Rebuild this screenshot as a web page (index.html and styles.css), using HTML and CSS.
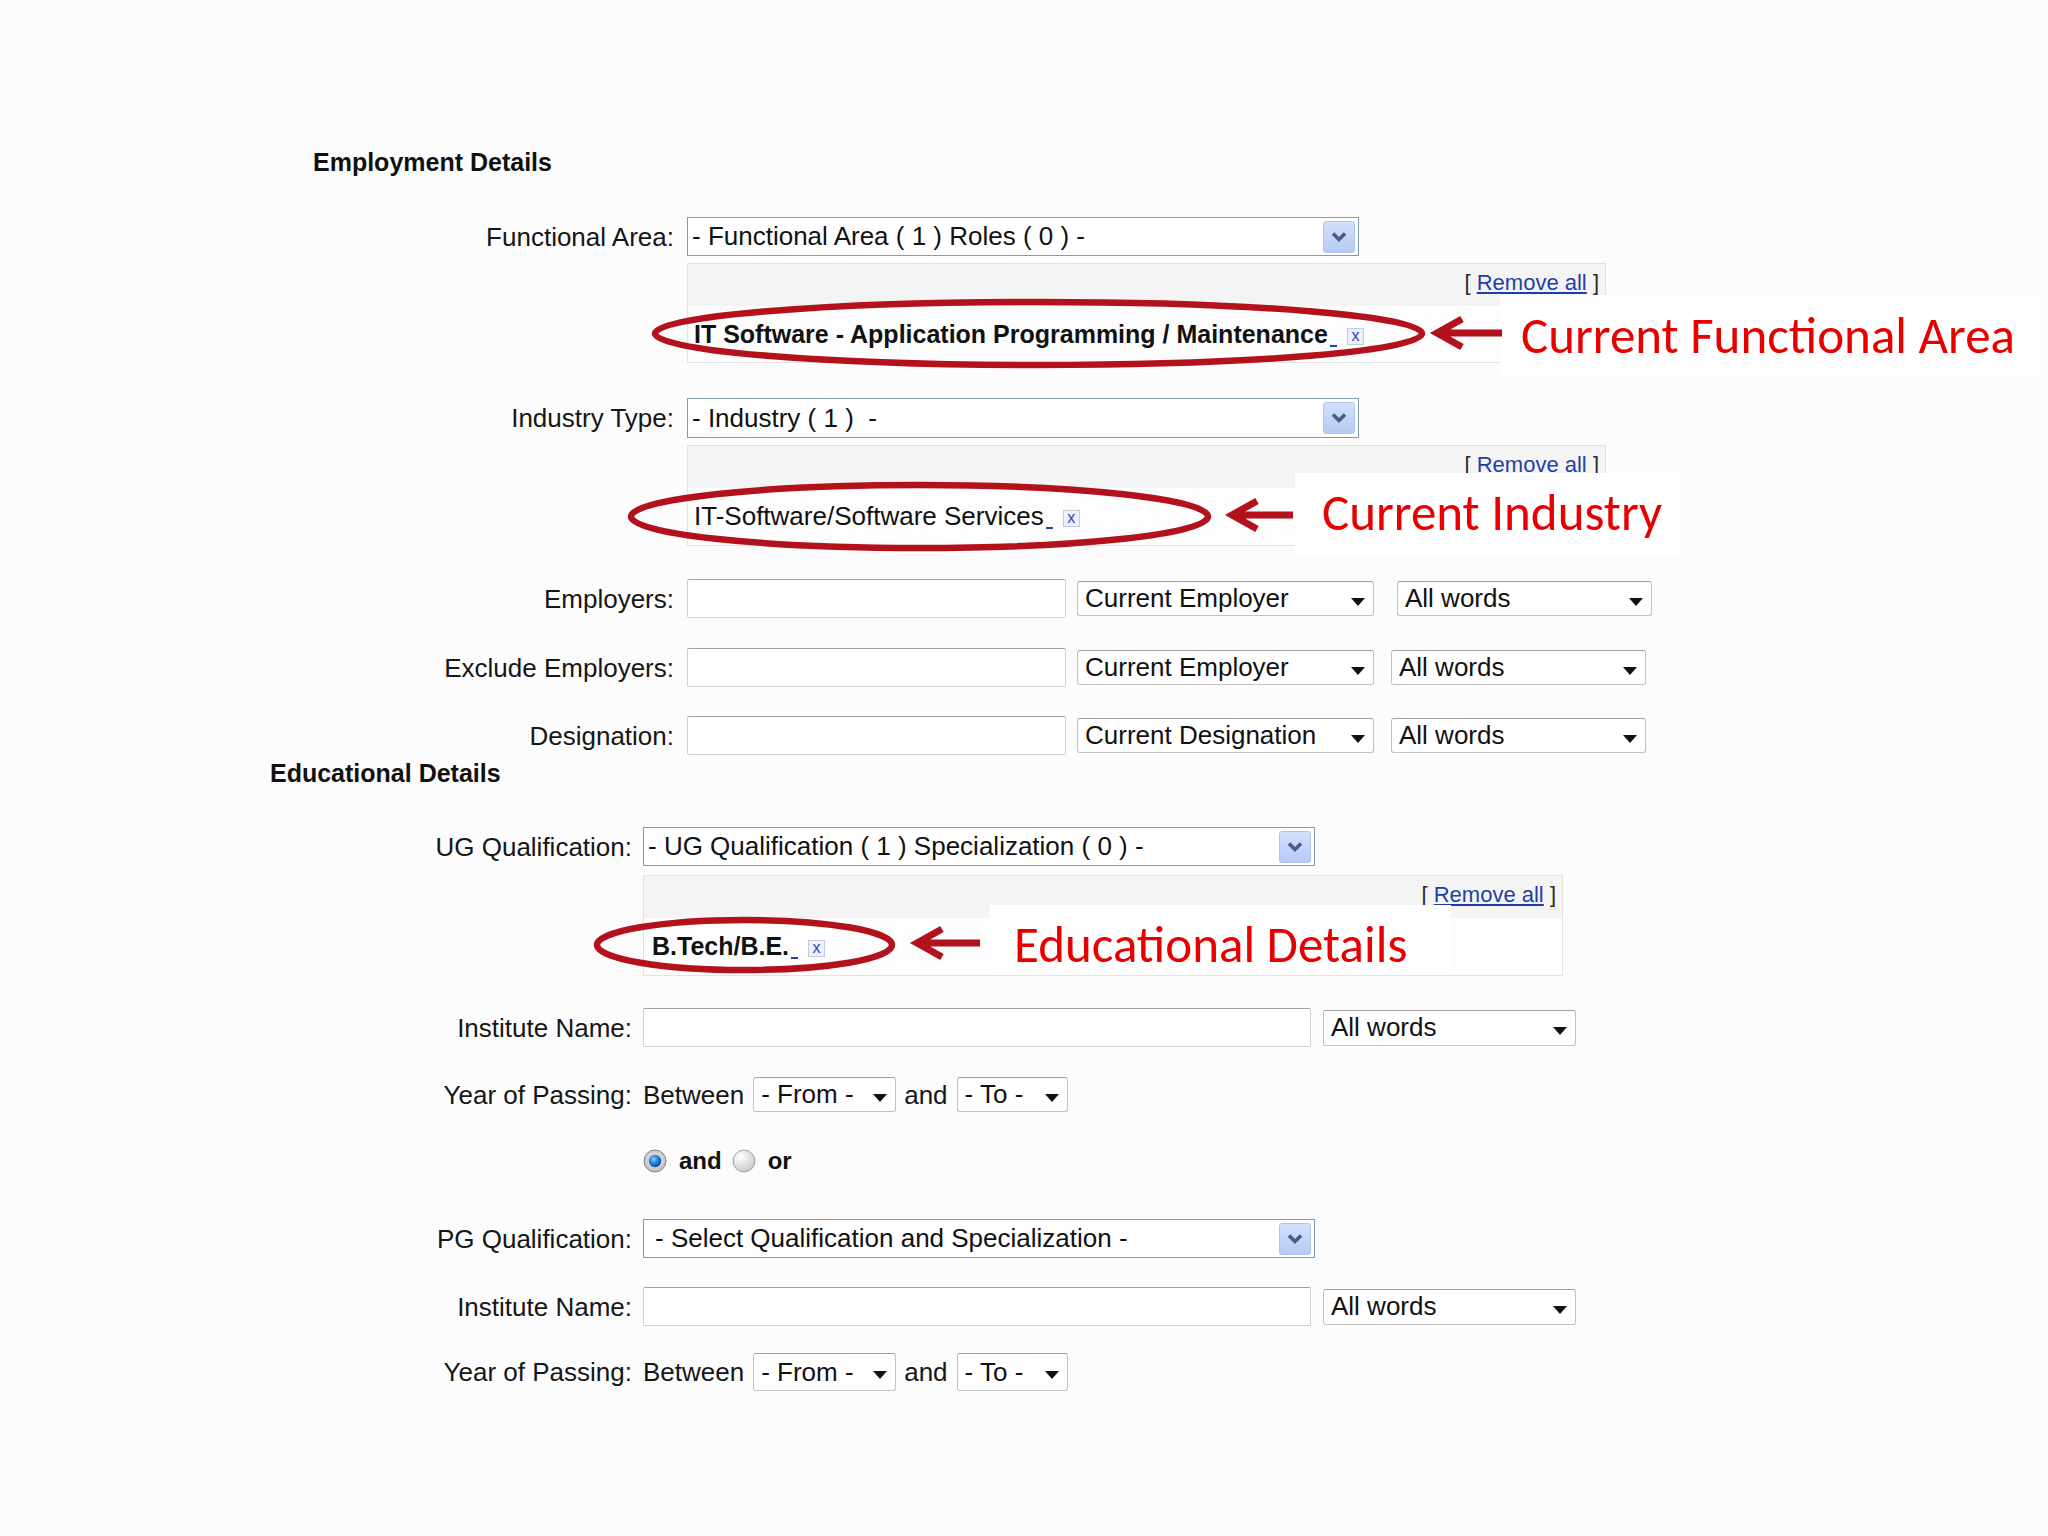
FILE: index.html
```html
<!DOCTYPE html>
<html>
<head>
<meta charset="utf-8">
<title>Employment and Educational Details</title>
<link rel="stylesheet" href="styles.css">
</head>
<body>
<div class="page">
  <div class="shot">
    <section class="emp">
      <h2 class="sec-title">Employment Details</h2>

      <div class="row r-fa">
        <span class="lbl">Functional Area:</span>
        <div class="xsel"><span class="xtext">- Functional Area ( 1 ) Roles ( 0 ) -</span><span class="xbtn"><svg viewBox="0 0 18 12" width="18" height="12"><path d="M3 2.5 L9 8.5 L15 2.5" fill="none" stroke="#4b5b82" stroke-width="3.6"/></svg></span></div>
      </div>
      <div class="picked p1">
        <div class="remove">[ <a class="rm">Remove all</a> ]</div>
        <div class="item"><b class="bold">IT Software - Application Programming / Maintenance</b><i class="u"></i><span class="x">x</span></div>
      </div>

      <div class="row r-it">
        <span class="lbl">Industry Type:</span>
        <div class="xsel"><span class="xtext">- Industry ( 1 ) &nbsp;-</span><span class="xbtn"><svg viewBox="0 0 18 12" width="18" height="12"><path d="M3 2.5 L9 8.5 L15 2.5" fill="none" stroke="#4b5b82" stroke-width="3.6"/></svg></span></div>
      </div>
      <div class="picked p2">
        <div class="remove">[ <a class="rm">Remove all</a> ]</div>
        <div class="item"><span>IT-Software/Software Services</span><i class="u"></i><span class="x">x</span></div>
      </div>

      <div class="row r-emp">
        <span class="lbl">Employers:</span>
        <div class="inp w-emp"></div>
        <div class="sel w-cur">Current Employer</div>
        <div class="sel w-all first">All words</div>
      </div>
      <div class="row r-exc">
        <span class="lbl">Exclude Employers:</span>
        <div class="inp w-emp"></div>
        <div class="sel w-cur">Current Employer</div>
        <div class="sel w-all">All words</div>
      </div>
      <div class="row r-des">
        <span class="lbl">Designation:</span>
        <div class="inp w-emp"></div>
        <div class="sel w-cur">Current Designation</div>
        <div class="sel w-all">All words</div>
      </div>
    </section>

    <section class="edu">
      <h2 class="sec-title">Educational Details</h2>

      <div class="row r-ug">
        <span class="lbl">UG Qualification:</span>
        <div class="xsel"><span class="xtext">- UG Qualification ( 1 ) Specialization ( 0 ) -</span><span class="xbtn"><svg viewBox="0 0 18 12" width="18" height="12"><path d="M3 2.5 L9 8.5 L15 2.5" fill="none" stroke="#4b5b82" stroke-width="3.6"/></svg></span></div>
      </div>
      <div class="picked p3">
        <div class="remove">[ <a class="rm">Remove all</a> ]</div>
        <div class="item"><b class="bold">B.Tech/B.E.</b><i class="u"></i><span class="x">x</span></div>
      </div>

      <div class="row r-inst">
        <span class="lbl">Institute Name:</span>
        <div class="inp w-inst"></div>
        <div class="sel w-all2">All words</div>
      </div>
      <div class="row r-year">
        <span class="lbl">Year of Passing:</span>
        <span class="txt">Between</span>
        <div class="sel w-from">- From -</div>
        <span class="txt and">and</span>
        <div class="sel w-to">- To -</div>
      </div>
      <div class="row r-radio">
        <span class="lbl"></span>
        <svg class="radio" viewBox="0 0 24 24" width="24" height="24">
          <defs>
            <radialGradient id="ringA" cx="50%" cy="45%" r="60%"><stop offset="0" stop-color="#fbfbfb"/><stop offset="1" stop-color="#b5b5b5"/></radialGradient>
            <radialGradient id="dotA" cx="40%" cy="35%" r="70%"><stop offset="0" stop-color="#86c8ff"/><stop offset="0.55" stop-color="#1f7ad2"/><stop offset="1" stop-color="#0b468f"/></radialGradient>
          </defs>
          <circle cx="12" cy="12" r="11" fill="url(#ringA)" stroke="#858585" stroke-width="1"/>
          <circle cx="12" cy="12" r="6.2" fill="url(#dotA)"/>
        </svg>
        <b class="rtxt r-and">and</b>
        <svg class="radio" viewBox="0 0 24 24" width="24" height="24">
          <defs>
            <radialGradient id="ringB" cx="35%" cy="30%" r="75%"><stop offset="0" stop-color="#ffffff"/><stop offset="1" stop-color="#c9c9c9"/></radialGradient>
          </defs>
          <circle cx="12" cy="12" r="11" fill="url(#ringB)" stroke="#a0a0a0" stroke-width="1"/>
        </svg>
        <b class="rtxt">or</b>
      </div>

      <div class="row r-pg">
        <span class="lbl">PG Qualification:</span>
        <div class="xsel pad"><span class="xtext">- Select Qualification and Specialization -</span><span class="xbtn"><svg viewBox="0 0 18 12" width="18" height="12"><path d="M3 2.5 L9 8.5 L15 2.5" fill="none" stroke="#4b5b82" stroke-width="3.6"/></svg></span></div>
      </div>
      <div class="row r-inst2">
        <span class="lbl">Institute Name:</span>
        <div class="inp w-inst"></div>
        <div class="sel w-all2">All words</div>
      </div>
      <div class="row r-year2">
        <span class="lbl">Year of Passing:</span>
        <span class="txt">Between</span>
        <div class="sel w-from">- From -</div>
        <span class="txt and">and</span>
        <div class="sel w-to">- To -</div>
      </div>
    </section>
  </div>

  <div class="note n1">Current Functional Area</div>
  <div class="note n2">Current Industry</div>
  <div class="note n3">Educational Details</div>

  <svg class="marks" viewBox="0 0 2048 1536" width="2048" height="1536">
    <g fill="none" stroke="#b3121c" stroke-width="6.5">
      <ellipse cx="1038.5" cy="333.5" rx="383.5" ry="31.5"/>
      <ellipse cx="919.5" cy="516.5" rx="288.5" ry="31.5"/>
      <ellipse cx="744.5" cy="945" rx="147.5" ry="25"/>
    </g>
    <g fill="none" stroke="#b3121c" stroke-width="7" stroke-linejoin="miter">
      <path d="M1502 333 H1440 M1462 319 L1437 333 L1462 347"/>
      <path d="M1293 515 H1235 M1257 501 L1232 515 L1257 529"/>
      <path d="M980 943 H920 M942 929 L917 943 L942 957"/>
    </g>
  </svg>
</div>
</body>
</html>
```

FILE: styles.css
```css
html, body {
  margin: 0;
  padding: 0;
  background: #fdfdfd;
}

body {
  font-family: "Liberation Sans", Arial, sans-serif;
  color: #1a1a1a;
}

.page {
  position: relative;
  width: 2048px;
  height: 1536px;
  padding-top: 100px;
  box-sizing: border-box;
  overflow: hidden;
  background: #fcfcfc;
}

.shot {
  margin-left: 240px;
  width: 1440px;
  padding-top: 47px;
  box-sizing: border-box;
}

.sec-title {
  margin: 0;
  font-size: 25px;
  font-weight: bold;
  line-height: 30px;
  color: #111;
}

.emp .sec-title { margin-left: 73px; }
.edu .sec-title { margin-left: 30px; margin-top: 3px; }

.row {
  display: flex;
  align-items: center;
}

.lbl {
  flex: none;
  text-align: right;
  font-size: 26px;
  line-height: 30px;
  color: #161616;
}

.emp .lbl { width: 434px; margin-right: 13px; }
.edu .lbl { width: 392px; margin-right: 11px; }

/* vertical rhythm */
.r-fa { margin-top: 40px; }
.r-it { margin-top: 35px; }
.r-emp { margin-top: 33px; }
.r-exc { margin-top: 30px; }
.r-des { margin-top: 29px; }
.r-ug { margin-top: 39px; }
.r-inst { margin-top: 32px; }
.r-year { margin-top: 30px; height: 35px; }
.r-radio { margin-top: 36px; height: 26px; }
.r-pg { margin-top: 45px; }
.r-inst2 { margin-top: 29px; }
.r-year2 { margin-top: 28px; height: 36px; }

/* XP style select with blue button */
.xsel {
  flex: none;
  width: 672px;
  height: 39px;
  box-sizing: border-box;
  border: 1px solid #7f9db9;
  background: #fff;
  display: flex;
  align-items: center;
  padding-left: 4px;
  font-size: 26px;
  color: #111;
}
.r-it .xsel { height: 40px; }
.xsel.pad { padding-left: 11px; }

.xtext { white-space: pre; }

.xbtn {
  margin-left: auto;
  margin-right: 3px;
  width: 32px;
  height: 32px;
  box-sizing: border-box;
  border: 1px solid #b3c5ee;
  border-radius: 3px;
  background: linear-gradient(#d3dffc, #b7cbf6);
  display: flex;
  align-items: center;
  justify-content: center;
}

/* picked item box */
.picked {
  box-sizing: border-box;
  border: 1px solid #e2e2e2;
  background: linear-gradient(#f4f4f4 0, #f4f4f4 42px, #fdfdfd 42px);
}
.p1 { margin: 7px 0 0 447px; width: 919px; height: 100px; }
.p2 { margin: 7px 0 0 447px; width: 919px; height: 101px; }
.p3 { margin: 9px 0 0 403px; width: 920px; height: 101px; }

.remove {
  text-align: right;
  padding: 7px 6px 0 0;
  font-size: 22px;
  line-height: 24px;
  color: #2a2a2a;
}
.rm {
  color: #1f3fa8;
  text-decoration: underline;
}

.item {
  margin-top: 24px;
  padding-left: 6px;
  font-size: 26px;
  line-height: 30px;
  color: #111;
  white-space: nowrap;
}
.p3 .item { padding-left: 8px; }
.bold { font-size: 25px; font-weight: bold; }

.u {
  display: inline-block;
  width: 7px;
  height: 2px;
  margin-left: 2px;
  background: #2540b0;
  vertical-align: -4px;
}

.x {
  display: inline-block;
  width: 17px;
  height: 17px;
  margin-left: 10px;
  box-sizing: border-box;
  border: 1px solid #c3cbe0;
  background: #eef1fa;
  color: #2a43c9;
  font-size: 16px;
  line-height: 13px;
  text-align: center;
  font-style: normal;
  vertical-align: 2px;
}

/* text inputs */
.inp {
  flex: none;
  height: 39px;
  box-sizing: border-box;
  border: 1px solid #cfcfcf;
  border-top-color: #a3a3a3;
  border-radius: 2px;
  background: #fff;
}
.w-emp { width: 379px; }
.w-inst { width: 668px; }

/* plain selects */
.sel {
  flex: none;
  height: 35px;
  box-sizing: border-box;
  border: 1px solid #c2c2c2;
  border-top-color: #a0a0a0;
  border-radius: 3px;
  background: #fff;
  display: flex;
  align-items: center;
  padding-left: 7px;
  font-size: 26px;
  color: #111;
  white-space: nowrap;
}
.sel::after {
  content: "";
  margin-left: auto;
  margin-right: 8px;
  margin-top: 6px;
  border-left: 7px solid transparent;
  border-right: 7px solid transparent;
  border-top: 8px solid #111;
}
.w-cur { width: 297px; margin-left: 11px; }
.w-all { width: 255px; margin-left: 17px; height: 35px; }
.w-all.first { margin-left: 23px; }
.w-all2 { width: 253px; margin-left: 12px; height: 36px; }
.w-from { width: 143px; }
.w-to { width: 111px; }
.r-year2 .sel { height: 38px; }

.txt {
  font-size: 26px;
  line-height: 30px;
  color: #161616;
  margin-right: 9px;
}
.txt.and { margin-left: 8px; }

.radio { flex: none; display: block; }
.rtxt {
  font-size: 24px;
  line-height: 26px;
  color: #111;
  margin-left: 12px;
  margin-right: 10px;
}

/* annotation overlays */
.note {
  position: absolute;
  background: #ffffff;
  color: #e60000;
  font-family: "Carlito", "Lato", sans-serif;
  font-size: 51px;
  line-height: 51px;
  box-sizing: border-box;
  white-space: nowrap;
  z-index: 2;
}
.n1 { left: 1500px; top: 295px; width: 540px; height: 82px; padding: 15px 0 0 21px; }
.n2 { left: 1295px; top: 473px; width: 385px; height: 84px; padding: 14px 0 0 27px; }
.n3 { left: 990px; top: 905px; width: 461px; height: 70px; padding: 14px 0 0 24px; }

.marks {
  position: absolute;
  left: 0;
  top: 0;
  z-index: 3;
  pointer-events: none;
}
```
